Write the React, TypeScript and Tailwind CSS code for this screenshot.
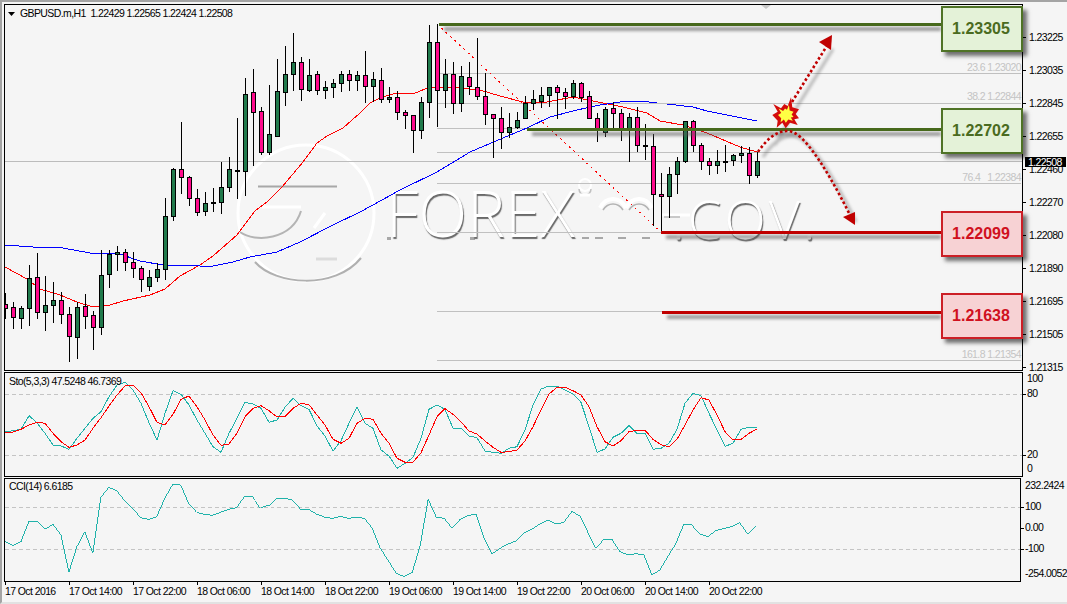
type Candle = [number, number, number, number, 'g' | 'p']

// top, bottom, wick high, wick low (page pixels), one bar every 8px from x=5
const candles: Candle[] = [
  [304, 308, 293, 318, 'p'], [307, 317, 302, 328, 'p'], [308, 318, 306, 328, 'g'], [278, 308, 265, 325, 'g'],
  [277, 312, 253, 318, 'p'], [305, 312, 276, 330, 'g'], [300, 305, 282, 322, 'g'], [300, 314, 292, 323, 'p'],
  [314, 336, 307, 361, 'p'], [307, 337, 302, 358, 'g'], [306, 316, 294, 328, 'p'], [315, 327, 311, 349, 'p'],
  [275, 327, 250, 334, 'g'], [254, 274, 250, 287, 'g'], [252, 254, 246, 270, 'g'], [252, 262, 249, 270, 'p'],
  [262, 268, 252, 277, 'p'], [268, 279, 266, 291, 'p'], [277, 286, 270, 290, 'g'], [269, 277, 263, 281, 'g'],
  [216, 269, 198, 279, 'g'], [169, 216, 168, 220, 'g'], [169, 177, 122, 193, 'p'], [177, 198, 176, 205, 'p'],
  [198, 212, 189, 215, 'p'], [203, 211, 192, 215, 'g'], [202, 203, 188, 211, 'g'], [187, 202, 162, 213, 'g'],
  [169, 187, 157, 191, 'g'], [170, 171, 118, 198, 'g'], [94, 171, 78, 195, 'g'], [92, 112, 69, 165, 'p'],
  [111, 152, 107, 154, 'p'], [134, 152, 85, 154, 'g'], [91, 136, 59, 136, 'g'], [74, 92, 46, 105, 'g'],
  [62, 74, 33, 90, 'g'], [62, 89, 57, 100, 'p'], [75, 90, 59, 91, 'g'], [74, 90, 71, 94, 'p'],
  [87, 90, 81, 98, 'g'], [83, 87, 79, 97, 'g'], [74, 83, 71, 91, 'g'], [74, 80, 70, 90, 'p'],
  [75, 80, 71, 90, 'g'], [75, 86, 51, 102, 'p'], [79, 86, 72, 101, 'g'], [80, 99, 68, 102, 'p'],
  [97, 99, 87, 102, 'g'], [97, 112, 91, 119, 'p'], [112, 115, 110, 128, 'p'], [115, 130, 115, 152, 'p'],
  [102, 130, 97, 138, 'g'], [42, 102, 25, 117, 'g'], [42, 90, 24, 126, 'p'], [74, 90, 59, 107, 'g'],
  [74, 103, 62, 113, 'p'], [76, 103, 66, 111, 'g'], [77, 86, 62, 94, 'p'], [87, 96, 38, 99, 'p'],
  [96, 114, 73, 124, 'p'], [114, 118, 114, 157, 'p'], [118, 132, 107, 148, 'p'], [127, 132, 113, 137, 'g'],
  [120, 127, 112, 128, 'g'], [103, 118, 96, 118, 'g'], [99, 103, 90, 109, 'g'], [95, 101, 87, 107, 'g'],
  [87, 95, 87, 106, 'g'], [87, 92, 85, 118, 'p'], [92, 96, 88, 108, 'p'], [83, 96, 80, 98, 'g'],
  [83, 97, 82, 101, 'p'], [96, 118, 91, 118, 'p'], [118, 129, 113, 141, 'p'], [109, 132, 107, 136, 'g'],
  [108, 113, 102, 129, 'p'], [113, 129, 109, 140, 'p'], [117, 129, 113, 161, 'g'], [117, 145, 107, 151, 'p'],
  [145, 146, 124, 159, 'g'], [146, 194, 134, 225, 'p'], [194, 196, 173, 232, 'p'], [174, 196, 167, 217, 'g'],
  [161, 174, 157, 193, 'g'], [121, 161, 121, 162, 'g'], [121, 145, 120, 151, 'p'], [145, 161, 143, 169, 'p'],
  [161, 165, 158, 174, 'p'], [161, 165, 150, 173, 'g'], [161, 162, 145, 171, 'g'], [155, 160, 154, 165, 'g'],
  [153, 155, 146, 162, 'g'], [153, 175, 147, 183, 'p'], [161, 175, 152, 177, 'g'],
]

const redMa = '5,267 27,279 40,289 60,295 77,302 93,307 110,305 123,301 150,295 165,289 180,276 200,265 213,256 237,235 255,211 267,202 282,187 303,162 317,143 327,136 343,128 360,113 370,103 382,97 397,93 413,94 425,89 440,87 460,88 480,90 500,96 523,102 547,102 573,97 593,101 623,107 647,113 660,121 683,125 707,133 740,147 757,152'
const blueMa = '5,245 33,247 63,248 90,253 117,253 140,261 163,265 200,266 213,266 233,262 250,257 277,252 300,242 333,225 360,212 382,200 400,190 437,172 470,152 503,138 527,128 550,117 577,110 600,105 627,101 640,101 657,103'
const blueMa2 = '667,104 693,107 707,111 757,121'

const stoMain = [185, 182, 178, 137, 158, 190, 225, 228, 238, 205, 175, 145, 125, 80, 45, 37, 60, 100, 158, 210, 130, 62, 73, 105, 150, 190, 230, 247, 190, 145, 97, 102, 115, 157, 150, 112, 85, 107, 118, 168, 198, 243, 212, 160, 112, 160, 175, 240, 258, 295, 280, 262, 205, 118, 105, 118, 175, 175, 198, 203, 243, 247, 250, 235, 230, 180, 105, 57, 48, 48, 60, 72, 97, 170, 247, 237, 202, 190, 167, 190, 190, 238, 235, 220, 178, 100, 70, 77, 130, 180, 229, 220, 178, 172, 172]
const stoSignal = [188, 186, 178, 165, 157, 160, 190, 215, 232, 225, 210, 175, 143, 108, 75, 48, 45, 68, 110, 157, 165, 133, 88, 78, 110, 150, 195, 226, 222, 190, 140, 115, 107, 122, 141, 140, 115, 100, 104, 135, 165, 208, 220, 205, 160, 145, 148, 190, 220, 265, 277, 277, 248, 195, 140, 116, 133, 155, 183, 192, 213, 232, 247, 245, 240, 213, 170, 120, 72, 52, 52, 62, 75, 110, 170, 215, 228, 212, 185, 181, 181, 208, 224, 230, 208, 165, 120, 83, 90, 135, 185, 210, 208, 190, 177]
const cci = [514, 526, 515, 454, 454, 478, 463, 495, 607, 530, 485, 550, 382, 352, 362, 392, 415, 443, 448, 440, 385, 343, 345, 400, 427, 433, 436, 427, 418, 413, 379, 379, 414, 405, 384, 384, 390, 417, 418, 432, 441, 445, 439, 445, 442, 445, 475, 535, 572, 610, 620, 608, 525, 388, 441, 445, 475, 448, 436, 433, 505, 552, 535, 522, 513, 488, 477, 462, 450, 462, 457, 424, 438, 487, 535, 508, 508, 545, 555, 551, 555, 615, 601, 560, 522, 463, 465, 492, 500, 482, 476, 470, 458, 492, 470]

const toPoints = (vals: number[]) => vals.map((v, i) => `${5 + 8 * i},${(370 + v / 3).toFixed(1)}`).join(' ')

const priceLabels = ['1.23225', '1.23035', '1.22845', '1.22655', '1.22460', '1.22270', '1.22080', '1.21890', '1.21695', '1.21505', '1.21315']
const timeLabels = ['17 Oct 2016', '17 Oct 14:00', '17 Oct 22:00', '18 Oct 06:00', '18 Oct 14:00', '18 Oct 22:00', '19 Oct 06:00', '19 Oct 14:00', '19 Oct 22:00', '20 Oct 06:00', '20 Oct 14:00', '20 Oct 22:00']
const fibLevels = [73, 103, 128, 152, 183, 232, 311, 360]

const star = '773.3,104 781,108.3 784.3,104 787.7,106 791,97.3 792.3,107.3 799,109.3 795.7,114 799,118.3 794.3,119.3 797.7,125 790,122.7 785.7,128.3 782.3,122.7 776.7,127.7 777.7,120.7 772.3,115 777.7,111.7'

const arrowDown = 'M758 152 C766 140 776 131 787 131 C797 131 806 142 814 153 C823 165 836 187 851 217'
const arrowUp = 'M792 102 L828 44'

function LevelBox({ value, top, kind }: { value: string; top: string; kind: 'green' | 'red' }) {
  return (
    <div
      className={`absolute left-[936px] flex h-[46px] w-[82px] items-center justify-center border-2 pr-[2px] text-[16px] font-bold tracking-normal shadow-[4px_4px_4px_rgba(0,0,0,0.55)] ${top} ${
        kind === 'green' ? 'border-[#4f7326] bg-[#e4f2d8] text-[#4a6b20]' : 'border-[#cc1f26] bg-[#f7d2d4] text-[#d0101e]'
      }`}
    >
      {value}
    </div>
  )
}

function MainChart() {
  return (
    <svg className="absolute left-0 top-0 block h-[365px] w-[1017px]" viewBox="5 5 1017 365">
      <defs>
        <filter id="soft" x="-20%" y="-200%" width="140%" height="500%">
          <feGaussianBlur stdDeviation="1.5" />
        </filter>
      </defs>
      <g shapeRendering="crispEdges">
        {fibLevels.map(y => (
          <line key={y} x1="437" x2="1021" y1={y + 0.5} y2={y + 0.5} stroke="#c0c0c0" />
        ))}
        <line x1="5" x2="1022" y1="161.5" y2="161.5" stroke="#bcbcbc" />
        <line x1="437" y1="24" x2="661" y2="232" stroke="#ff0000" strokeDasharray="2 4" />
        <polyline points={redMa} fill="none" stroke="#ff0000" />
        <polyline points={blueMa} fill="none" stroke="#0000ff" />
        <polyline points={blueMa2} fill="none" stroke="#0000ff" />
        {candles.map(([top, bot, hi, lo, c], i) => {
          const x = 5 + 8 * i
          return (
            <g key={i}>
              <line x1={x + 0.5} x2={x + 0.5} y1={hi} y2={lo + 1} stroke="#000" />
              <rect x={x - 1.5} y={top + 0.5} width="4" height={bot - top} fill={c === 'g' ? '#217a4c' : '#ff0a8c'} stroke="#000" />
            </g>
          )
        })}
      </g>
      {/* line and arrow shadows */}
      <g filter="url(#soft)" opacity="0.55">
        <rect x="444" y="27" width="497" height="4" fill="#555" />
        <rect x="532" y="132" width="409" height="4" fill="#555" />
        <rect x="666" y="235" width="275" height="4" fill="#555" />
        <rect x="667" y="315" width="274" height="4" fill="#555" />
      </g>
      <g filter="url(#soft)" opacity="0.35" fill="none" stroke="#444" strokeWidth="3" transform="translate(5 5)">
        <path d={arrowDown} />
        <path d={arrowUp} />
        <path d="M770 140 L792 102" />
      </g>
      <g shapeRendering="crispEdges">
        <rect x="439" y="23" width="504" height="3" fill="#47691c" />
        <rect x="527" y="128" width="416" height="3" fill="#47691c" />
        <rect x="661" y="231" width="282" height="3" fill="#c00000" />
        <rect x="662" y="311" width="281" height="3" fill="#c00000" />
      </g>
      <g fill="none" stroke="#c00000" strokeWidth="2.6" strokeDasharray="2.6 2.4">
        <path d={arrowDown} />
        <path d={arrowUp} />
      </g>
      <polygon points="832,35 819,42 831,50" fill="#c00000" />
      <polygon points="855,225 843,217 855,212" fill="#c00000" />
      <polygon points={star} fill="#d40c0c" />
      <polygon points={star} fill="#ffff44" transform="translate(786 115) scale(0.58) translate(-786 -115)" />
      <polygon points="761,5 771,5 766,9" fill="#c8c8c8" />
    </svg>
  )
}

function Watermark() {
  return (
    <>
      <svg className="absolute left-0 top-0 block h-[365px] w-[1017px]" viewBox="5 5 1017 365" fill="none">
        <circle cx="306" cy="213" r="68" stroke="#ffffff" strokeWidth="3" />
        <path d="M255 262 C275 285 335 290 361 258" stroke="#b0b0b0" strokeWidth="2" />
        <path d="M240 232 C255 243 292 240 301 211" stroke="#b4b4b4" strokeWidth="2" />
        <path d="M262 207 L301 207" stroke="#ffffff" strokeWidth="3" />
        <path d="M258 186.5 L337 186.5" stroke="#a8a8a8" strokeWidth="2" />
        <path d="M316 259 L337 259" stroke="#dcdcdc" strokeWidth="3" />
        <path d="M314 228 L325 213" stroke="#ffffff" strokeWidth="3" />
        {/* small ring and arcs of the logo between the two words */}
        <circle cx="585" cy="185" r="6" stroke="#ffffff" strokeWidth="2" />
        <path d="M579 189 A6 6 0 0 0 591 189" stroke="#c0c0c0" strokeWidth="1.5" />
        <path d="M580 195 L590 195" stroke="#ffffff" strokeWidth="3" />
        <path d="M600 208 C606 196 620 196 626 208 M626 208 C632 196 646 196 652 208" stroke="#ffffff" strokeWidth="4" />
        <path d="M603 210 C608 202 618 202 623 210 M629 210 C634 202 644 202 649 210" stroke="#b4b4b4" strokeWidth="1.5" />
        <path d="M662 215 L690 215" stroke="#ffffff" strokeWidth="3" />
        <path d="M664 217 L680 217" stroke="#b8b8b8" strokeWidth="1.5" />
        <g fill="#a8a8a8" shapeRendering="crispEdges">
          <rect x="387" y="237" width="4" height="3" />
          <rect x="470" y="237" width="5" height="3" />
          <rect x="582" y="237" width="7" height="2" />
          <rect x="595" y="237" width="8" height="2" />
          <rect x="618" y="237" width="8" height="2" />
          <rect x="642" y="237" width="8" height="2" />
        </g>
      </svg>
      <span className="absolute left-[381px] top-[173px] font-['Open_Sans',sans-serif] text-[64px] font-light leading-[70px] tracking-normal text-white [text-shadow:1px_2px_1px_rgba(70,70,70,0.8)]">
        FOREX
      </span>
      <span className="absolute left-[667px] top-[178px] font-['Open_Sans',sans-serif] text-[54px] font-light leading-[70px] tracking-[3px] text-white [text-shadow:1px_2px_1px_rgba(70,70,70,0.8)]">
        .COV.
      </span>
    </>
  )
}

function IndicatorLines({ children, viewBox }: { children: React.ReactNode; viewBox: string }) {
  return (
    <svg className="absolute left-0 top-0 block h-full w-full" viewBox={viewBox} shapeRendering="crispEdges" fill="none">
      {children}
    </svg>
  )
}

function AxisTick({ label, tick = true, mt = '' }: { label: string; tick?: boolean; mt?: string }) {
  return (
    <div className={`flex h-[14px] items-center ${mt}`}>
      <span className={`h-px w-[3px] ${tick ? 'bg-black' : ''}`} />
      <span className="ml-[1px] whitespace-nowrap">{label}</span>
    </div>
  )
}

export default function App() {
  return (
    <div className="box-border h-[604px] w-[1067px] overflow-hidden border-b-2 border-l-2 border-t-2 border-[#a4a4a4] border-b-[#e2e2e2] bg-[#f5f5f5] pl-[2px] pt-[2px] font-['Liberation_Sans',sans-serif] text-[10.5px] tracking-[-0.6px] text-black">
      {/* main pane */}
      <div className="flex h-[367px]">
        <div className="relative box-border h-[367px] w-[1019px] border border-black">
          <Watermark />
          <MainChart />
          <div className="absolute left-[3px] top-[1px] flex items-center gap-[5px] whitespace-pre">
            <svg width="7" height="4" viewBox="0 0 7 4"><polygon points="0,0 7,0 3.5,4" fill="#000" /></svg>
            <span>GBPUSD.m,H1  1.22429 1.22565 1.22424 1.22508</span>
          </div>
          <span className="absolute right-[1px] top-[55px] whitespace-pre text-[#c4c4c4]">23.6 1.23020</span>
          <span className="absolute right-[1px] top-[84px] whitespace-pre text-[#c4c4c4]">38.2 1.22844</span>
          <span className="absolute right-[1px] top-[165px] whitespace-pre text-[#c4c4c4]">76.4   1.22384</span>
          <span className="absolute right-[1px] top-[342px] whitespace-pre text-[#c4c4c4]">161.8 1.21354</span>
          <LevelBox value="1.23305" top="top-[1px]" kind="green" />
          <LevelBox value="1.22702" top="top-[103px]" kind="green" />
          <LevelBox value="1.22099" top="top-[206px]" kind="red" />
          <LevelBox value="1.21638" top="top-[288px]" kind="red" />
        </div>
        <div className="relative flex-1 pt-[17px]">
          {priceLabels.map(p => (
            <div key={p} className="flex h-[33px] items-center">
              <span className="h-px w-[3px] bg-black" />
              <span className="ml-[3px] whitespace-nowrap">{p}</span>
            </div>
          ))}
          <span className="absolute left-[2px] top-[153px] h-[10px] w-[41px] bg-black pl-[3px] leading-[10px] text-white">1.22508</span>
        </div>
      </div>

      {/* stochastic */}
      <div className="mt-px flex h-[105px]">
        <div className="relative box-border h-[105px] w-[1019px] border border-black">
          <IndicatorLines viewBox="5 373 1017 103">
            <line x1="5" x2="1022" y1="394.5" y2="394.5" stroke="#c4c4c4" strokeDasharray="4 3" />
            <line x1="5" x2="1022" y1="455.5" y2="455.5" stroke="#c4c4c4" strokeDasharray="4 3" />
            <polyline points={toPoints(stoMain)} stroke="#20b2aa" />
            <polyline points={toPoints(stoSignal)} stroke="#ff0000" />
          </IndicatorLines>
          <span className="absolute left-[4px] top-[1px] whitespace-pre">Sto(5,3,3) 47.5248 46.7369</span>
        </div>
        <div className="flex-1">
          <AxisTick label="100" tick={false} />
          <AxisTick label="80" mt="mt-px" />
          <AxisTick label="20" mt="mt-[47px]" />
          <AxisTick label="0" tick={false} />
        </div>
      </div>

      {/* cci */}
      <div className="mt-px flex h-[104px]">
        <div className="relative box-border h-[104px] w-[1019px] border border-black">
          <IndicatorLines viewBox="5 479 1017 102">
            <line x1="5" x2="1022" y1="507.5" y2="507.5" stroke="#c4c4c4" strokeDasharray="4 3" />
            <line x1="5" x2="1022" y1="549.5" y2="549.5" stroke="#c4c4c4" strokeDasharray="4 3" />
            <polyline points={toPoints(cci)} stroke="#20b2aa" />
          </IndicatorLines>
          <span className="absolute left-[4px] top-0 whitespace-pre">CCI(14) 6.6185</span>
        </div>
        <div className="flex-1 pt-px">
          <AxisTick label="232.2424" tick={false} />
          <AxisTick label="100" mt="mt-[7px]" />
          <AxisTick label="0.00" mt="mt-[7px]" />
          <AxisTick label="-100" mt="mt-[7px]" />
          <AxisTick label="-254.0052" tick={false} mt="mt-[11px]" />
        </div>
      </div>

      {/* time axis */}
      <div className="ml-px flex">
        {timeLabels.map(t => (
          <div key={t} className="w-[64px]">
            <div className="h-[3px] w-px bg-black" />
            <div className="whitespace-nowrap leading-[13px]">{t}</div>
          </div>
        ))}
      </div>
    </div>
  )
}
